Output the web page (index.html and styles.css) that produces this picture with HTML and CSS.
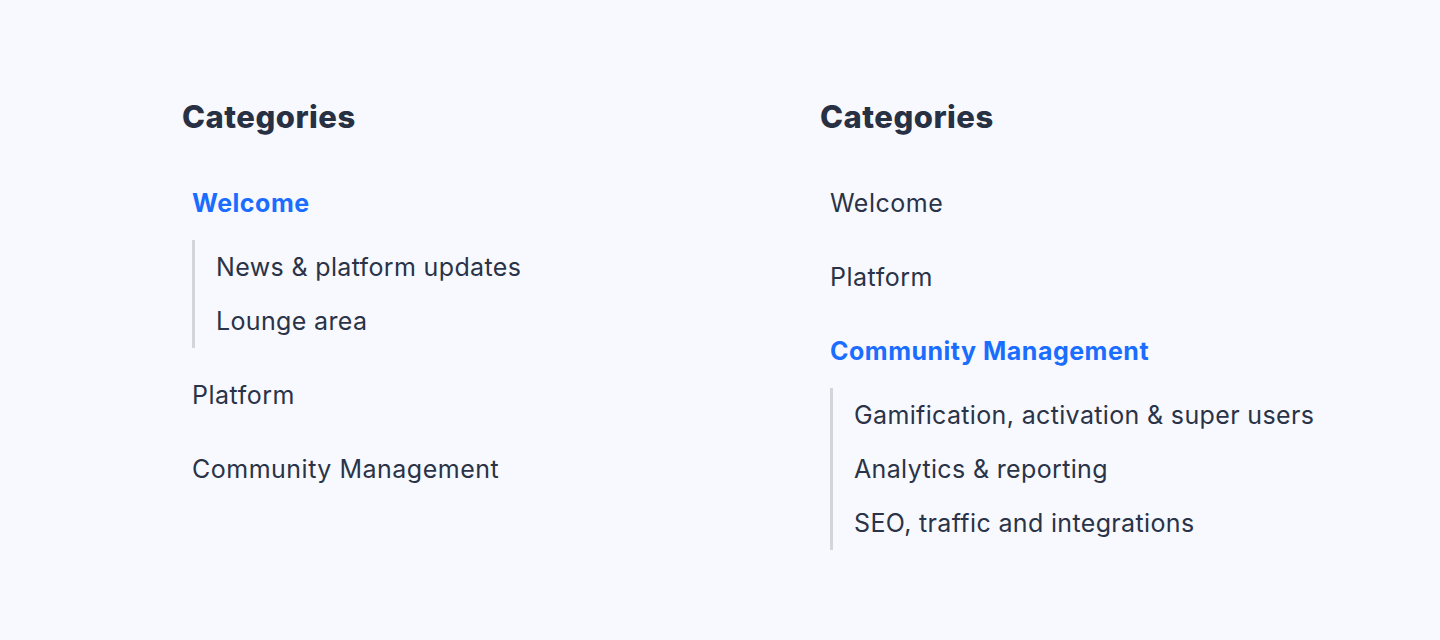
FILE: index.html
```html
<!DOCTYPE html>
<html lang="en">
<head>
<meta charset="utf-8">
<title>Categories</title>
<link rel="stylesheet" href="styles.css">
</head>
<body>
<div class="page">
  <section class="col">
    <h2 class="title">Categories</h2>
    <ul class="cats">
      <li class="cat active">Welcome</li>
      <li>
        <ul class="subs">
          <li class="sub">News &amp; platform updates</li>
          <li class="sub">Lounge area</li>
        </ul>
      </li>
      <li class="cat">Platform</li>
      <li class="cat">Community Management</li>
    </ul>
  </section>
  <section class="col">
    <h2 class="title">Categories</h2>
    <ul class="cats">
      <li class="cat">Welcome</li>
      <li class="cat">Platform</li>
      <li class="cat active">Community Management</li>
      <li>
        <ul class="subs">
          <li class="sub">Gamification, activation &amp; super users</li>
          <li class="sub">Analytics &amp; reporting</li>
          <li class="sub">SEO, traffic and integrations</li>
        </ul>
      </li>
    </ul>
  </section>
</div>
</body>
</html>
```
FILE: styles.css
```css
html, body {
  margin: 0;
  padding: 0;
  background: #f7f9fe;
}
body {
  font-family: "Inter", "Lato", "Liberation Sans", sans-serif;
  color: #2a3347;
  height: 640px;
}
.page {
  display: flex;
  padding: 99px 0 0 182px;
}
.col {
  flex: 0 0 638px;
}
.title {
  margin: 0 0 31px;
  font-size: 31px;
  line-height: 36px;
  font-weight: 800;
  letter-spacing: 0.5px;
  color: #283044;
}
.cats, .subs {
  list-style: none;
  margin: 0;
  padding: 0;
}
.cat {
  height: 74px;
  display: flex;
  align-items: center;
  padding-left: 10px;
  font-size: 25px;
  letter-spacing: 0.5px;
}
.cat.active {
  color: #1a6dff;
  font-weight: 700;
}
.subs {
  margin: 0 0 10px 10px;
  border-left: 3px solid #d3d5db;
}
.sub {
  height: 54px;
  display: flex;
  align-items: center;
  padding-left: 21px;
  font-size: 25px;
  letter-spacing: 0.35px;
}
```
